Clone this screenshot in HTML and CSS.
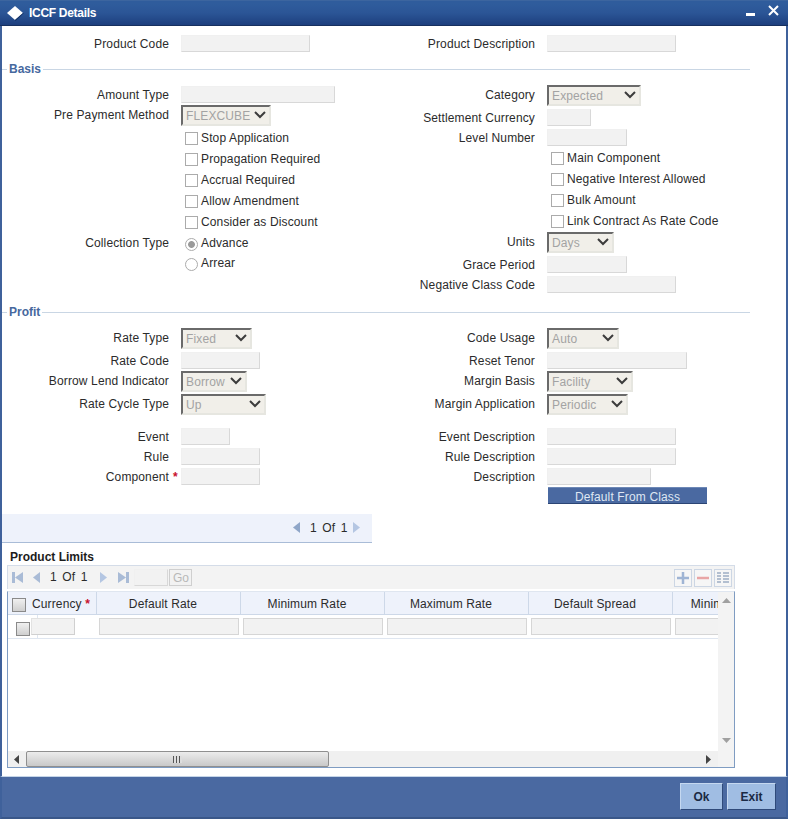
FILE: index.html
```html
<!DOCTYPE html>
<html lang="en">
<head>
<meta charset="utf-8">
<title>ICCF Details</title>
<link rel="stylesheet" href="styles.css">
</head>
<body>
<div class="app">
  <header class="titlebar">
    <svg class="logo" width="18" height="16" viewBox="0 0 18 16"><path d="M9 1 17 8 9 15 1 8Z" fill="#fff"/><path d="M9 15 17 8 18 8 9.500 16Z" fill="#14305f"/></svg>
    <h1 class="title">ICCF Details</h1>
    <div class="winctl">
      <span class="win-min"></span>
      <svg width="11" height="11" viewBox="0 0 11 11"><path d="M1 1 10 10M10 1 1 10" stroke="#fff" stroke-width="2" fill="none"/></svg>
    </div>
  </header>

  <main class="main">
    <div class="cols top">
      <div class="row"><label class="lbl">Product Code</label><input class="fld w129" disabled></div>
      <div class="row"><label class="lbl">Product Description</label><input class="fld w129" disabled></div>
    </div>

    <div class="legend"><span>Basis</span></div>
    <div class="cols">
      <div class="col pt8">
        <div class="row"><label class="lbl">Amount Type</label><input class="fld w154" disabled></div>
        <div class="row mt2 h21"><label class="lbl">Pre Payment Method</label><div class="sel w90"><span>FLEXCUBE</span><svg class="chev" width="12" height="8" viewBox="0 0 12 8"><path d="M1 1 6 6 11 1" stroke="#3c3c3c" stroke-width="2" fill="none"/></svg></div></div>
        <div class="chk-row mt2"><input type="checkbox" class="chk" disabled><span>Stop Application</span></div>
        <div class="chk-row"><input type="checkbox" class="chk" disabled><span>Propagation Required</span></div>
        <div class="chk-row"><input type="checkbox" class="chk" disabled><span>Accrual Required</span></div>
        <div class="chk-row"><input type="checkbox" class="chk" disabled><span>Allow Amendment</span></div>
        <div class="chk-row"><input type="checkbox" class="chk" disabled><span>Consider as Discount</span></div>
        <div class="row h20"><label class="lbl">Collection Type</label><input type="radio" class="rad" name="ct" checked disabled><span class="rad-text">Advance</span></div>
        <div class="row h20"><span class="lbl"></span><input type="radio" class="rad" name="ct" disabled><span class="rad-text">Arrear</span></div>
      </div>
      <div class="col pt7">
        <div class="row h21"><label class="lbl">Category</label><div class="sel w94"><span>Expected</span><svg class="chev" width="12" height="8" viewBox="0 0 12 8"><path d="M1 1 6 6 11 1" stroke="#3c3c3c" stroke-width="2" fill="none"/></svg></div></div>
        <div class="row mt3"><label class="lbl">Settlement Currency</label><input class="fld w44" disabled></div>
        <div class="row mt3"><label class="lbl">Level Number</label><input class="fld w80" disabled></div>
        <div class="chk-row mt2"><input type="checkbox" class="chk" disabled><span>Main Component</span></div>
        <div class="chk-row"><input type="checkbox" class="chk" disabled><span>Negative Interest Allowed</span></div>
        <div class="chk-row"><input type="checkbox" class="chk" disabled><span>Bulk Amount</span></div>
        <div class="chk-row"><input type="checkbox" class="chk" disabled><span>Link Contract As Rate Code</span></div>
        <div class="row h21"><label class="lbl">Units</label><div class="sel w67"><span>Days</span><svg class="chev" width="12" height="8" viewBox="0 0 12 8"><path d="M1 1 6 6 11 1" stroke="#3c3c3c" stroke-width="2" fill="none"/></svg></div></div>
        <div class="row mt3"><label class="lbl">Grace Period</label><input class="fld w80" disabled></div>
        <div class="row mt3"><label class="lbl">Negative Class Code</label><input class="fld w129" disabled></div>
      </div>
    </div>

    <div class="legend profit"><span>Profit</span></div>
    <div class="cols">
      <div class="col pt7">
        <div class="row h21"><label class="lbl">Rate Type</label><div class="sel w71"><span>Fixed</span><svg class="chev" width="12" height="8" viewBox="0 0 12 8"><path d="M1 1 6 6 11 1" stroke="#3c3c3c" stroke-width="2" fill="none"/></svg></div></div>
        <div class="row mt3"><label class="lbl">Rate Code</label><input class="fld w79" disabled></div>
        <div class="row mt2 h21"><label class="lbl">Borrow Lend Indicator</label><div class="sel w66"><span>Borrow</span><svg class="chev" width="12" height="8" viewBox="0 0 12 8"><path d="M1 1 6 6 11 1" stroke="#3c3c3c" stroke-width="2" fill="none"/></svg></div></div>
        <div class="row mt2 h21"><label class="lbl">Rate Cycle Type</label><div class="sel w85"><span>Up</span><svg class="chev" width="12" height="8" viewBox="0 0 12 8"><path d="M1 1 6 6 11 1" stroke="#3c3c3c" stroke-width="2" fill="none"/></svg></div></div>
        <div class="row mt13"><label class="lbl">Event</label><input class="fld w49" disabled></div>
        <div class="row mt3"><label class="lbl">Rule</label><input class="fld w79" disabled></div>
        <div class="row mt3"><label class="lbl">Component<em class="req hang">*</em></label><input class="fld w79" disabled></div>
      </div>
      <div class="col pt7">
        <div class="row h21"><label class="lbl">Code Usage</label><div class="sel w72"><span>Auto</span><svg class="chev" width="12" height="8" viewBox="0 0 12 8"><path d="M1 1 6 6 11 1" stroke="#3c3c3c" stroke-width="2" fill="none"/></svg></div></div>
        <div class="row mt3"><label class="lbl">Reset Tenor</label><input class="fld w140" disabled></div>
        <div class="row mt2 h21"><label class="lbl">Margin Basis</label><div class="sel w86"><span>Facility</span><svg class="chev" width="12" height="8" viewBox="0 0 12 8"><path d="M1 1 6 6 11 1" stroke="#3c3c3c" stroke-width="2" fill="none"/></svg></div></div>
        <div class="row mt2 h21"><label class="lbl">Margin Application</label><div class="sel w81"><span>Periodic</span><svg class="chev" width="12" height="8" viewBox="0 0 12 8"><path d="M1 1 6 6 11 1" stroke="#3c3c3c" stroke-width="2" fill="none"/></svg></div></div>
        <div class="row mt13"><label class="lbl">Event Description</label><input class="fld w129" disabled></div>
        <div class="row mt3"><label class="lbl">Rule Description</label><input class="fld w129" disabled></div>
        <div class="row mt3"><label class="lbl">Description</label><input class="fld w104" disabled></div>
        <button class="btn-class" type="button">Default From Class</button>
      </div>
    </div>

    <div class="pager-strip">
      <svg class="arw" width="7" height="11" viewBox="0 0 7 11"><path d="M7 0V11L0 5.500Z" fill="#8fa6c8"/></svg>
      <span class="pg-text">1 Of 1</span>
      <svg class="arw" width="7" height="11" viewBox="0 0 7 11"><path d="M0 0V11L7 5.500Z" fill="#b4c6e2"/></svg>
    </div>

    <h2 class="sec-title">Product Limits</h2>
    <div class="toolbar">
      <svg class="tb-first" width="11" height="11" viewBox="0 0 11 11"><path d="M0 0H3V11H0ZM11 0V11L3 5.500Z" fill="#a9bbd6"/></svg>
      <svg class="tb-prev" width="8" height="11" viewBox="0 0 8 11"><path d="M7 0V11L0 5.500Z" fill="#a9bbd6"/></svg>
      <span class="tb-text">1 Of 1</span>
      <svg class="tb-next" width="8" height="11" viewBox="0 0 8 11"><path d="M1 0V11L8 5.500Z" fill="#b4c6e2"/></svg>
      <svg class="tb-last" width="11" height="11" viewBox="0 0 11 11"><path d="M0 0 8 5.500 0 11ZM8 0H11V11H8Z" fill="#a9bbd6"/></svg>
      <input class="fld tb-input" disabled>
      <button class="tb-go" type="button" disabled>Go</button>
      <div class="tb-actions">
        <span class="tb-btn"><svg width="14" height="14" viewBox="0 0 14 14"><path d="M7 1V13M1 7H13" stroke="#9fb4d4" stroke-width="2.500" fill="none"/></svg></span>
        <span class="tb-btn"><svg width="14" height="14" viewBox="0 0 14 14"><path d="M1 7H13" stroke="#e8a5a5" stroke-width="2.500" fill="none"/></svg></span>
        <span class="tb-btn"><svg width="14" height="14" viewBox="0 0 14 14"><path d="M1 2H5M7 2H13M1 5H5M7 5H13M1 8H5M7 8H13M1 11H5M7 11H13" stroke="#b3bfd0" stroke-width="2" fill="none"/></svg></span>
      </div>
    </div>

    <div class="grid">
      <div class="grid-view">
        <table class="tbl">
          <colgroup><col class="c0"><col class="c1"><col class="c2"><col class="c2"><col class="c2"><col class="c2"><col class="c2"></colgroup>
          <thead>
            <tr>
              <th class="th-chk"><span class="gchk"></span></th>
              <th class="th-cur">Currency <em class="req">*</em></th>
              <th>Default Rate</th>
              <th>Minimum Rate</th>
              <th>Maximum Rate</th>
              <th>Default Spread</th>
              <th class="th-last">Minimum Spread</th>
            </tr>
          </thead>
          <tbody>
            <tr>
              <td class="td-chk"><span class="gchk"></span></td>
              <td class="td-cur"><input class="fld cell-cur" disabled></td>
              <td><input class="fld cell" disabled></td>
              <td><input class="fld cell" disabled></td>
              <td><input class="fld cell" disabled></td>
              <td><input class="fld cell" disabled></td>
              <td><input class="fld cell" disabled></td>
            </tr>
          </tbody>
        </table>
      </div>
      <div class="vbar">
        <svg width="9" height="5" viewBox="0 0 9 5"><path d="M4.500 0 9 5H0Z" fill="#a0a0a0"/></svg>
        <svg width="9" height="5" viewBox="0 0 9 5"><path d="M0 0H9L4.500 5Z" fill="#a0a0a0"/></svg>
      </div>
      <div class="hbar">
        <svg class="h-left" width="5" height="9" viewBox="0 0 5 9"><path d="M5 0V9L0 4.500Z" fill="#444"/></svg>
        <div class="h-thumb"><span class="grip"></span></div>
        <svg class="h-right" width="5" height="9" viewBox="0 0 5 9"><path d="M0 0V9L5 4.500Z" fill="#444"/></svg>
      </div>
      <div class="corner"></div>
    </div>
  </main>

  <footer class="footer">
    <button class="fbtn ok" type="button">Ok</button>
    <button class="fbtn exit" type="button">Exit</button>
  </footer>
</div>
</body>
</html>
```

FILE: styles.css
```css
* { box-sizing: border-box; }
html, body { margin: 0; padding: 0; }
body { font: 12px/14px "Liberation Sans", Arial, sans-serif; letter-spacing: .13px; color: #2b2b2b; background: #fff; }
.app { width: 788px; height: 819px; display: flex; flex-direction: column; overflow: hidden; }

.titlebar { height: 26px; flex: none; display: flex; align-items: center; padding: 0 9px 0 6px; color: #fff;
  background: linear-gradient(#2f5c9c 0, #2f5c9c 3px, #2b5596 50%, #1d3f7e 100%); border-top: 1px solid #3c659f; border-bottom: 1px solid #17305f; }
.logo { flex: none; margin-right: 5px; }
.title { margin: 0; font-size: 12px; font-weight: bold; letter-spacing: -.3px; color: #fff; }
.winctl { margin-left: auto; display: flex; align-items: center; gap: 13px; margin-top: -6px; }
.win-min { width: 9px; height: 3px; background: #fff; margin-top: 8px; }

.main { flex: 1; min-height: 0; border-left: 2px solid #3f619b; border-right: 2px solid #3f619b; background: #fff; }
.cols { display: grid; grid-template-columns: 366px 1fr; }
.top { padding-top: 9px; }
.pt7 { padding-top: 7px; }
.pt8 { padding-top: 8px; }
.row { display: flex; align-items: center; height: 17px; white-space: nowrap; }
.h20 { height: 20px; padding-top: 1px; }
.h21 { height: 21px; }
.mt2 { margin-top: 2px; }
.mt3 { margin-top: 3px; }
.mt13 { margin-top: 13px; }
.lbl { width: 167px; margin-right: 12px; text-align: right; flex: none; }
.h20 .lbl, .h21 .lbl, .rad-text { padding-bottom: 2px; }
.req { color: #c8102e; font-style: normal; font-weight: bold; }
.hang { display: inline-block; width: 6px; margin: 0 -10px 0 4px; text-align: left; }

.fld { display: block; height: 17px; padding: 0; margin: 0; background: #f2f2f2; border: 1px solid #f0f0f0; border-right-color: #d8d8d8; border-bottom-color: #d8d8d8; border-radius: 0; flex: none; }
.w44 { width: 44px; } .w49 { width: 49px; } .w79 { width: 79px; } .w80 { width: 80px; }
.w104 { width: 104px; } .w129 { width: 129px; } .w140 { width: 140px; } .w154 { width: 154px; }

.sel { height: 21px; flex: none; display: flex; align-items: center; justify-content: space-between; padding: 1px 3px 0 3px; color: #a3a3a3; background: #f1efe9;
  border: 2px solid; border-color: #6a6a6a #e6e6e0 #e6e6e0 #6a6a6a; }
.w66 { width: 66px; } .w67 { width: 67px; } .w71 { width: 71px; } .w72 { width: 72px; }
.w81 { width: 81px; } .w85 { width: 85px; } .w86 { width: 86px; } .w90 { width: 90px; } .w94 { width: 94px; }
.chev { flex: none; margin-top: -2px; }

.chk-row { display: flex; align-items: center; height: 21px; padding-left: 183px; white-space: nowrap; }
.chk-row span { padding-bottom: 2px; }
.chk, .rad { appearance: none; -webkit-appearance: none; width: 13px; height: 13px; margin: 0 3px 0 0; flex: none; background: #fff; border: 1px solid #ababab; }
.rad { border-radius: 50%; margin: 2px 3px 0 4px; }
.rad:checked { background: radial-gradient(circle, #9a9a9a 0, #9a9a9a 3px, #fff 3.800px); }

.legend { display: flex; align-items: center; height: 18px; margin: 8px 36px 0 0; font-weight: bold; letter-spacing: 0; color: #46689e; }
.legend::before { content: ""; width: 5px; height: 1px; background: #c9d6e4; margin-right: 2px; }
.legend::after { content: ""; flex: 1; height: 1px; background: #c9d6e4; margin-left: 2px; }
.profit { margin-top: 10px; }

.btn-class { display: block; width: 159px; height: 17px; margin: 2px 0 0 180px; padding: 3px 0 0; font: 12px/13px "Liberation Sans", Arial, sans-serif; letter-spacing: .14px; color: #dfe7f3; background: #4a69a1; border: 0; border-top: 1px solid #6d88b6; border-bottom: 1px solid #2b4574; overflow: hidden; }

.pager-strip { width: 370px; height: 29px; margin-top: 10px; display: flex; align-items: center; padding: 0 0 2px 291px; background: #eef2fb; border-bottom: 1px solid #a9bcd7; }
.pg-text { margin: 2px 6px 0 10px; word-spacing: 2px; }

.sec-title { margin: 0 0 0 8px; height: 22px; font-size: 12px; line-height: 29px; font-weight: bold; letter-spacing: 0; color: #1c1c1c; }

.toolbar { width: 728px; height: 24px; margin-left: 5px; display: flex; align-items: center; padding-left: 4px; background: #f3f3f3; border-top: 1px solid #d4dce8; border-left: 1px solid #d4dce8; border-right: 1px solid #d4dce8; }
.tb-prev { margin-left: 10px; }
.tb-text { margin-left: 9px; padding-bottom: 2px; word-spacing: 2px; }
.tb-next { margin-left: 12px; }
.tb-last { margin-left: 11px; }
.tb-input { width: 34px; margin-left: 5px; }
.tb-go { width: 23px; height: 17px; padding: 0; margin-left: 1px; font: 12px "Liberation Sans", Arial, sans-serif; color: #b8b8b8; background: #f2f2f2; border: 1px solid #cfcfcf; }
.tb-actions { margin-left: auto; display: flex; gap: 2px; padding-right: 2px; }
.tb-btn { width: 18px; height: 18px; display: flex; align-items: center; justify-content: center; border: 1px solid #ccd6e4; background: #f6f6f6; }

.grid { width: 728px; height: 177px; margin: 2px 0 0 5px; display: grid; grid-template-columns: 1fr 16px; grid-template-rows: 1fr 16px; border: 1px solid #7f9cc2; border-top-color: #dfe6f0; }
.grid-view { overflow: hidden; min-width: 0; min-height: 0; }
.tbl { table-layout: fixed; border-collapse: separate; border-spacing: 0; width: 809px; }
.c0 { width: 21px; } .c1 { width: 68px; } .c2 { width: 144px; }
.tbl th { height: 23px; padding: 2px 11px 0 0; font-weight: normal; text-align: center; background: #eef2fb; border-right: 1px solid #cdd8e8; border-bottom: 1px solid #cdd8e8; white-space: nowrap; overflow: hidden; }
.tbl th.th-chk { border-right: 0; padding: 0; }
.tbl th.th-cur { text-align: left; padding: 2px 0 0 3px; }
.tbl th.th-last { border-right: 0; padding-right: 16px; }
.tbl td { height: 24px; padding: 0 0 0 2px; border-bottom: 1px solid #dfe6f0; }
.tbl td.td-chk { padding: 0; }
.tbl td.td-cur { padding-left: 2px; background: linear-gradient(90deg, transparent 8px, #dfe6f0 8px, #dfe6f0 9px, transparent 9px); }
.gchk { display: block; width: 14px; height: 14px; border: 1px solid #8a8a8a; background: linear-gradient(#f0f0f0, #cfcfcf); }
.th-chk .gchk { margin: 3px 0 0 4px; }
.td-chk .gchk { margin: 4px 0 0 8px; }
.cell-cur { width: 44px; background: #f2f2f2; border: 1px solid #e2e2e2; border-right-color: #d0d0d0; border-bottom-color: #d0d0d0; }
.cell { width: 140px; background: #f2f2f2; border: 1px solid #d6d6d6; }

.vbar { background: #f3f3f3; display: flex; flex-direction: column; justify-content: space-between; align-items: center; padding: 6px 0 8px; }
.hbar { display: flex; align-items: center; background: #f0f0f0; padding-left: 6px; }
.h-thumb { width: 303px; height: 16px; margin-left: 7px; display: flex; align-items: center; justify-content: center; background: linear-gradient(#ececec, #c9c9c9); border: 1px solid #8f8f8f; border-radius: 2px; }
.grip { width: 9px; height: 7px; background: repeating-linear-gradient(90deg, #555 0, #555 1px, #ddd 1px, #ddd 3px); }
.h-right { margin-left: auto; margin-right: 7px; }
.corner { background: #f3f3f3; }

.footer { height: 43px; flex: none; display: flex; justify-content: flex-end; align-items: flex-start; gap: 4px; padding: 6px 10px 0 0; background: #4a69a1; border-top: 1px solid #c5d5e8; border-left: 2px solid #3f619b; border-right: 2px solid #3f619b; border-bottom: 2px solid #3a5789; }
.fbtn { height: 27px; padding: 0; font: bold 12px "Liberation Sans", Arial, sans-serif; color: #1b2a44; background: #a0bde3; border: 1px solid; border-color: #c5d8f0 #2f4a7a #2f4a7a #c5d8f0; }
.ok { width: 43px; }
.exit { width: 49px; }
```
